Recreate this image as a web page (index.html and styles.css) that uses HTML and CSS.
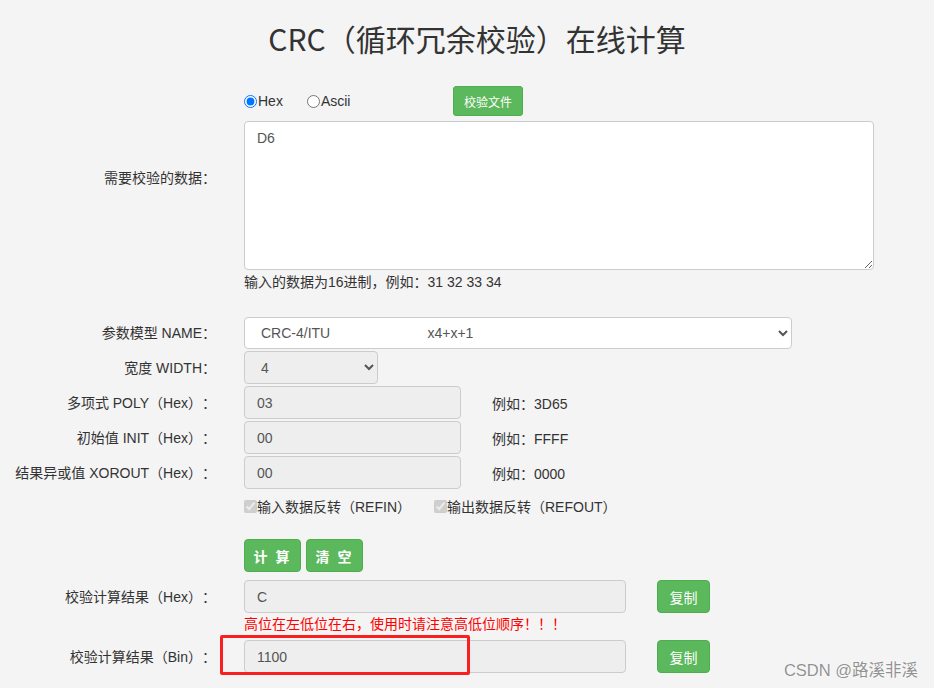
FILE: index.html
```html
<!DOCTYPE html>
<html lang="zh-CN">
<head>
<meta charset="utf-8">
<title>CRC（循环冗余校验）在线计算</title>
<link rel="stylesheet" href="styles.css">
</head>
<body>
<div class="page">
  <h1 class="title">CRC（循环冗余校验）在线计算</h1>

  <div class="row row-radio">
    <div class="label"></div>
    <div class="field radios">
      <div class="radio-group">
        <label class="radio"><input type="radio" name="fmt" checked>Hex</label>
        <label class="radio"><input type="radio" name="fmt">Ascii</label>
      </div>
      <button class="btn btn-sm" type="button">校验文件</button>
    </div>
  </div>

  <div class="row row-data">
    <div class="label label-top">需要校验的数据：</div>
    <div class="field">
      <textarea class="textarea">D6</textarea>
      <div class="hint">输入的数据为16进制，例如：31 32 33 34</div>
    </div>
  </div>

  <div class="row row-name">
    <div class="label">参数模型 NAME：</div>
    <div class="field">
      <select class="control select-name">
        <option>CRC-4/ITU&nbsp;&nbsp;&nbsp;&nbsp;&nbsp;&nbsp;&nbsp;&nbsp;&nbsp;&nbsp;&nbsp;&nbsp;&nbsp;&nbsp;&nbsp;&nbsp;&nbsp;&nbsp;&nbsp;&nbsp;&nbsp;&nbsp;&nbsp;&nbsp;&nbsp;x4+x+1</option>
      </select>
    </div>
  </div>

  <div class="row row-param">
    <div class="label">宽度 WIDTH：</div>
    <div class="field">
      <select class="control select-width" disabled>
        <option>4</option>
      </select>
    </div>
  </div>

  <div class="row row-param">
    <div class="label">多项式 POLY（Hex）：</div>
    <div class="field">
      <input class="control input-short" type="text" value="03" readonly>
      <span class="example">例如：3D65</span>
    </div>
  </div>

  <div class="row row-param">
    <div class="label">初始值 INIT（Hex）：</div>
    <div class="field">
      <input class="control input-short" type="text" value="00" readonly>
      <span class="example">例如：FFFF</span>
    </div>
  </div>

  <div class="row row-param">
    <div class="label">结果异或值 XOROUT（Hex）：</div>
    <div class="field">
      <input class="control input-short" type="text" value="00" readonly>
      <span class="example">例如：0000</span>
    </div>
  </div>

  <div class="row row-check">
    <div class="label"></div>
    <div class="field">
      <label class="check check-in"><input type="checkbox" checked disabled>输入数据反转（REFIN）</label>
      <label class="check"><input type="checkbox" checked disabled>输出数据反转（REFOUT）</label>
    </div>
  </div>

  <div class="row row-actions">
    <div class="label"></div>
    <div class="field actions">
      <button class="btn btn-action" type="button">计 算</button>
      <button class="btn btn-action" type="button">清 空</button>
    </div>
  </div>

  <div class="row row-result">
    <div class="label">校验计算结果（Hex）：</div>
    <div class="field">
      <input class="control input-result" type="text" value="C" readonly>
      <button class="btn btn-copy" type="button">复制</button>
    </div>
  </div>

  <div class="row row-warn">
    <div class="label"></div>
    <div class="field warn">高位在左低位在右，使用时请注意高低位顺序！！！</div>
  </div>

  <div class="row row-bin">
    <div class="label">校验计算结果（Bin）：</div>
    <div class="field bin-field">
      <input class="control input-result" type="text" value="1100" readonly>
      <button class="btn btn-copy" type="button">复制</button>
      <div class="annot"></div>
    </div>
  </div>

  <div class="watermark">CSDN @路溪非溪</div>
</div>
</body>
</html>
```

FILE: styles.css
```css
html, body {
  margin: 0;
  padding: 0;
  background: #f4f4f4;
}

body {
  font-family: "Liberation Sans", "Noto Sans CJK SC", sans-serif;
  font-size: 14px;
  color: #333;
  text-spacing-trim: space-all;
}

.page {
  position: relative;
  min-height: 688px;
  box-sizing: border-box;
  padding-top: 21px;
}

.title {
  margin: 0;
  padding-left: 20px;
  text-align: center;
  font-family: "Noto Sans CJK SC", sans-serif;
  font-size: 30px;
  line-height: 34px;
  font-weight: normal;
  color: #333;
}

.row {
  display: flex;
  align-items: center;
}

.label {
  width: 216px;
  flex: none;
  text-align: right;
  color: #333;
  line-height: 20px;
}

.field {
  margin-left: 28px;
  display: flex;
  align-items: center;
}

/* radio row */
.row-radio {
  margin-top: 31px;
  height: 30px;
}

.radio-group {
  width: 209px;
  display: flex;
  align-items: center;
}

.radio {
  display: inline-flex;
  align-items: center;
  margin-right: 24px;
  cursor: pointer;
}

.radio input {
  margin: 0 1px 0 0;
  width: 13px;
  height: 13px;
}

.btn {
  font-family: inherit;
  color: #fff;
  background: #5cb85c;
  border: 1px solid #4cae4c;
  border-radius: 4px;
  cursor: pointer;
  box-sizing: border-box;
}

.btn-sm {
  height: 30px;
  padding: 0 10px;
  font-size: 12px;
  border-radius: 3px;
}

/* data row */
.row-data {
  margin-top: 5px;
  align-items: flex-start;
}

.label-top {
  margin-top: 47px;
}

.row-data .field {
  flex-direction: column;
  align-items: flex-start;
}

.textarea {
  display: block;
  width: 630px;
  height: 149px;
  box-sizing: border-box;
  padding: 6px 12px;
  font-family: inherit;
  font-size: 14px;
  line-height: 20px;
  color: #555;
  background: #fff;
  border: 1px solid #ccc;
  border-radius: 4px;
  margin: 0;
}

.hint {
  margin-top: 2px;
  line-height: 20px;
  color: #333;
}

/* controls */
.control {
  box-sizing: border-box;
  height: 33px;
  margin: 0;
  padding: 6px 12px;
  font-family: inherit;
  font-size: 14px;
  color: #555;
  background: #eee;
  border: 1px solid #ccc;
  border-radius: 4px;
}

.row-name {
  margin-top: 25px;
}

.select-name {
  width: 548px;
  height: 32px;
  background: #fff;
  padding-left: 12px;
}

.row-param {
  margin-top: 2px;
}

.select-width {
  width: 134px;
  padding-left: 12px;
  opacity: 1;
  color: #555;
}

.input-short {
  width: 217px;
}

.example {
  margin-left: 31px;
  color: #333;
}

/* checkboxes */
.row-check {
  margin-top: 7px;
  height: 20px;
}

.check {
  display: inline-flex;
  align-items: center;
}

.check input {
  margin: 0;
  width: 13px;
  height: 13px;
}

.check-in {
  margin-right: 23px;
}

/* actions */
.row-actions {
  margin-top: 23px;
}

.actions {
  gap: 5px;
}

.btn-action {
  height: 33px;
  width: 57px;
  padding: 0;
  font-size: 14px;
  font-weight: bold;
  letter-spacing: 2px;
}

/* results */
.row-result {
  margin-top: 8px;
}

.input-result {
  width: 382px;
}

.btn-copy {
  margin-left: 31px;
  height: 33px;
  width: 53px;
  padding: 0;
  font-size: 14px;
}

.row-warn {
  margin-top: 1px;
  height: 20px;
}

.warn {
  color: #f00;
  line-height: 20px;
}

.row-bin {
  margin-top: 6px;
}

.bin-field {
  position: relative;
}

.annot {
  position: absolute;
  left: -24px;
  top: -5px;
  width: 250px;
  height: 40px;
  box-sizing: border-box;
  border: 3px solid #fb2020;
  border-radius: 2px;
  pointer-events: none;
}

.watermark {
  position: absolute;
  right: 16px;
  bottom: 7px;
  font-size: 16.5px;
  line-height: 22px;
  color: rgba(110, 110, 110, 0.75);
  text-shadow: 0 0 2px #fff;
}
```
